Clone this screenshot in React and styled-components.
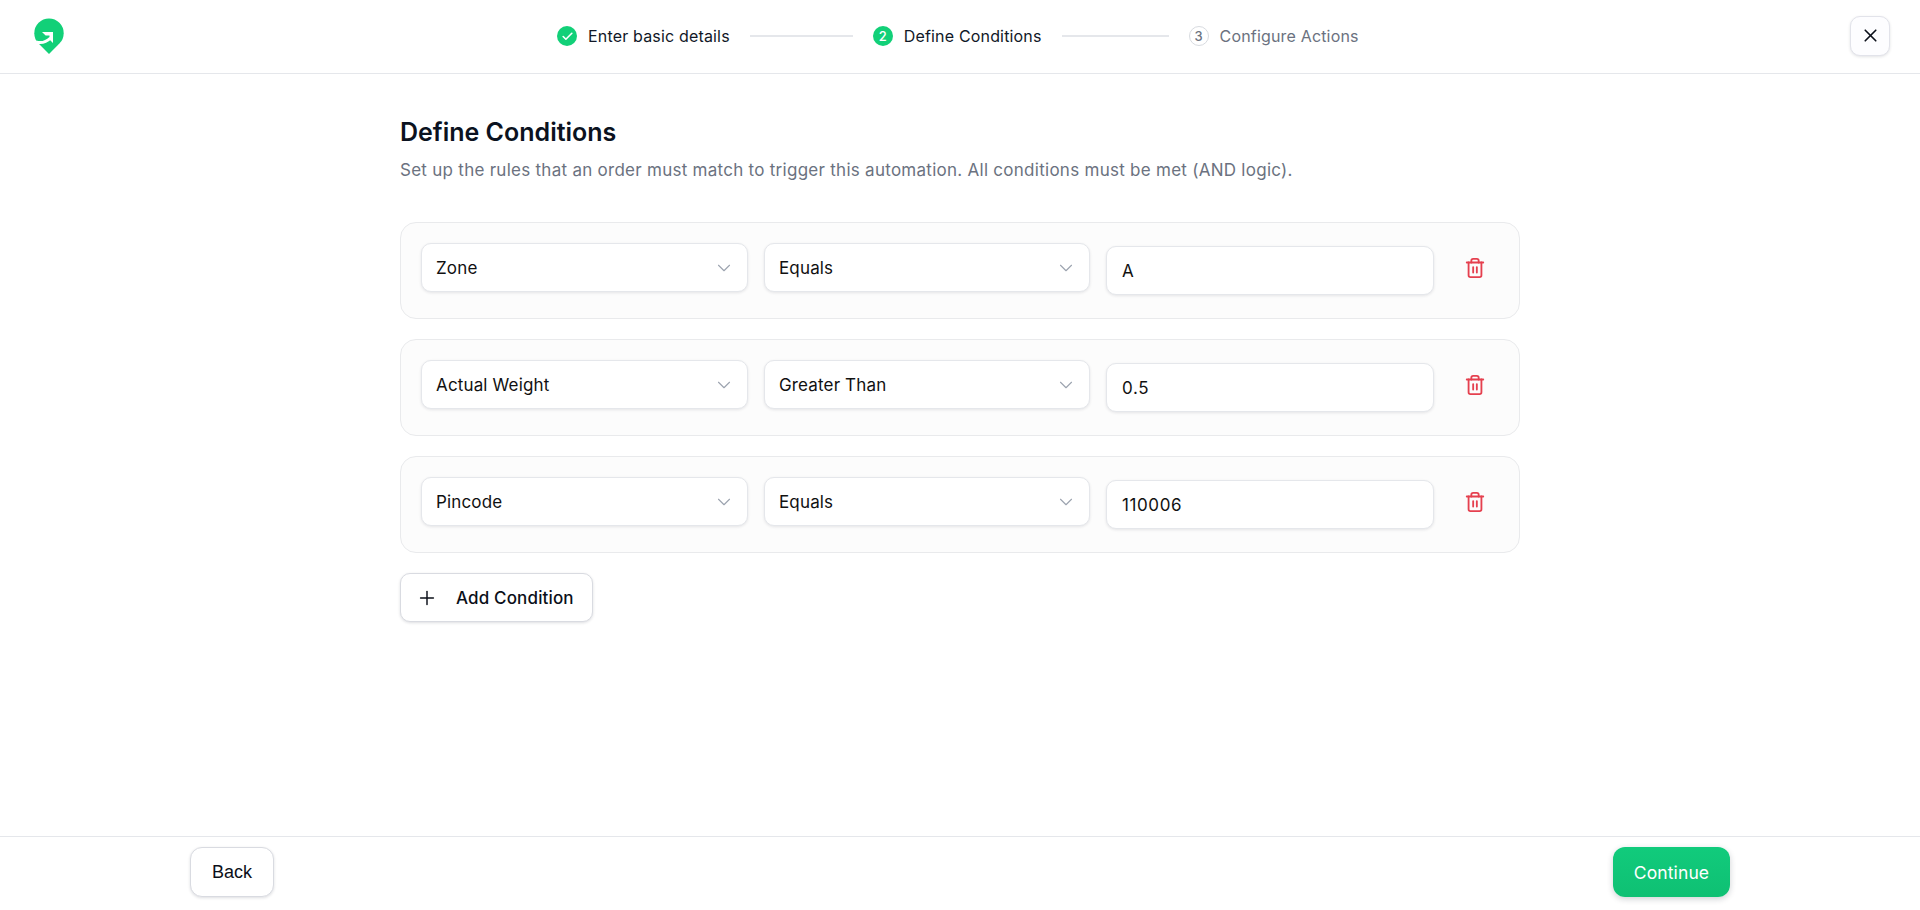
import React from "react";
import styled, { createGlobalStyle } from "styled-components";
import { Check, ChevronDown, Plus, Trash2, X } from "lucide-react";

const GlobalStyle = createGlobalStyle`
  html, body {
    margin: 0;
    padding: 0;
    height: 100%;
    background: #ffffff;
  }
  body {
    font-family: Inter, "Noto Sans", sans-serif;
    color: #0b0f19;
  }
  * {
    box-sizing: border-box;
  }
`;

const conditions = [
  { field: "Zone", operator: "Equals", value: "A" },
  { field: "Actual Weight", operator: "Greater Than", value: "0.5" },
  { field: "Pincode", operator: "Equals", value: "110006" },
];

const Logo = () => (
  <LogoMark width="30" height="36" viewBox="0 0 30 36">
    <path
      d="M15 36 L4.6 25.6 A14.7 14.7 0 1 1 25.4 25.6 Z"
      fill="#12d078"
    />
    <path
      d="M2 24 C7 25.4 12 24.4 16.5 20"
      fill="none"
      stroke="#ffffff"
      strokeWidth="3"
    />
    <path d="M8 14 H19 V25 L15.5 21.5 V17.5 H11.6 Z" fill="#ffffff" />
  </LogoMark>
);

const Step = ({ state, number, label }) => (
  <StepItem>
    <StepCircle $state={state}>
      {state === "done" ? <Check size={13} strokeWidth={3} /> : number}
    </StepCircle>
    <StepLabel $state={state}>{label}</StepLabel>
  </StepItem>
);

const Select = ({ value }) => (
  <SelectBox>
    <span>{value}</span>
    <ChevronDown size={22} strokeWidth={1.2} color="#9ca3af" />
  </SelectBox>
);

const ConditionRow = ({ field, operator, value }) => (
  <RowCard>
    <Select value={field} />
    <Select value={operator} />
    <ValueInput readOnly value={value} />
    <DeleteButton aria-label="Delete condition">
      <Trash2 size={22} strokeWidth={2} color="#e5404f" />
    </DeleteButton>
  </RowCard>
);

const App = () => {
  return (
    <Page>
      <GlobalStyle />
      <Header>
        <Logo />
        <Stepper>
          <Step state="done" label="Enter basic details" />
          <StepLine $width={103} />
          <Step state="active" number="2" label="Define Conditions" />
          <StepLine $width={107} />
          <Step state="todo" number="3" label="Configure Actions" />
        </Stepper>
        <CloseButton aria-label="Close">
          <X size={21} strokeWidth={1.9} color="#0b0f19" />
        </CloseButton>
      </Header>

      <Main>
        <Title>Define Conditions</Title>
        <Subtitle>
          Set up the rules that an order must match to trigger this automation.
          All conditions must be met (AND logic).
        </Subtitle>
        <Rows>
          {conditions.map((item) => (
            <ConditionRow key={item.field} {...item} />
          ))}
        </Rows>
        <AddButton>
          <Plus size={22} strokeWidth={1.6} color="#0b0f19" />
          Add Condition
        </AddButton>
      </Main>

      <Footer>
        <BackButton>Back</BackButton>
        <ContinueButton>Continue</ContinueButton>
      </Footer>
    </Page>
  );
};

const Page = styled.div`
  display: flex;
  flex-direction: column;
  height: 910px;
  background: #ffffff;
`;

const Header = styled.header`
  position: relative;
  display: flex;
  align-items: center;
  justify-content: space-between;
  height: 74px;
  padding: 0 30px 2px 34px;
  border-bottom: 1px solid #e5e7eb;
`;

const LogoMark = styled.svg`
  display: block;
`;

const Stepper = styled.nav`
  position: absolute;
  top: 26px;
  left: 557px;
  display: flex;
  align-items: center;
  gap: 20px;
`;

const StepItem = styled.div`
  display: flex;
  align-items: center;
  gap: 11px;
`;

const StepCircle = styled.span`
  display: flex;
  align-items: center;
  justify-content: center;
  width: 20px;
  height: 20px;
  border-radius: 50%;
  font-size: 13px;
  font-weight: 500;
  color: ${(p) => (p.$state === "todo" ? "#6b7280" : "#ffffff")};
  background: ${(p) => (p.$state === "todo" ? "#ffffff" : "#12d078")};
  border: ${(p) => (p.$state === "todo" ? "1px solid #d8dbe0" : "none")};
`;

const StepLabel = styled.span`
  font-size: 16px;
  line-height: 20px;
  font-weight: 400;
  letter-spacing: 0.17px;
  white-space: nowrap;
  color: ${(p) => (p.$state === "todo" ? "#6b7280" : "#111827")};
`;

const StepLine = styled.span`
  display: block;
  width: ${(p) => p.$width}px;
  height: 2px;
  background: #e5e7eb;
`;

const CloseButton = styled.button`
  display: flex;
  align-items: center;
  justify-content: center;
  width: 40px;
  height: 40px;
  padding: 0;
  background: #fdfdff;
  border: 1px solid #e2e3ea;
  border-radius: 10px;
  box-shadow: 0 1px 3px rgba(16, 24, 40, 0.12);
`;

const Main = styled.main`
  flex: 1;
  width: 1120px;
  margin: 0 auto;
  padding-top: 42px;
`;

const Title = styled.h1`
  margin: 0;
  font-size: 25px;
  line-height: 32px;
  font-weight: 600;
  color: #0b1220;
`;

const Subtitle = styled.p`
  margin: 8px 0 0;
  font-size: 17px;
  line-height: 28px;
  font-weight: 400;
  letter-spacing: 0.27px;
  color: #6b7280;
`;

const Rows = styled.div`
  display: flex;
  flex-direction: column;
  gap: 20px;
  margin-top: 38px;
`;

const RowCard = styled.div`
  display: grid;
  grid-template-columns: 327px 326px 328px 49px;
  gap: 16px;
  align-items: center;
  height: 97px;
  padding: 0 20px;
  background: #fcfcfc;
  border: 1px solid #e9eaec;
  border-radius: 16px;
`;

const SelectBox = styled.div`
  display: flex;
  align-items: center;
  justify-content: space-between;
  height: 49px;
  padding: 0 12px 0 14px;
  margin-bottom: 6px;
  font-size: 17px;
  letter-spacing: 0.15px;
  color: #111111;
  background: #ffffff;
  border: 1px solid #e5e7eb;
  border-radius: 10px;
  box-shadow: 0 1px 3px rgba(16, 24, 40, 0.1);
`;

const ValueInput = styled.input`
  display: block;
  width: 100%;
  height: 49px;
  padding: 2px 15px 0;
  margin-bottom: 1px;
  font-family: inherit;
  font-size: 17px;
  letter-spacing: 0.6px;
  color: #111111;
  background: #ffffff;
  border: 1px solid #e5e7eb;
  border-radius: 10px;
  outline: none;
  box-shadow: 0 1px 3px rgba(16, 24, 40, 0.1);
`;

const DeleteButton = styled.button`
  display: flex;
  align-items: center;
  justify-content: center;
  height: 49px;
  margin-bottom: 5px;
  padding: 0;
  background: transparent;
  border: none;
`;

const AddButton = styled.button`
  display: flex;
  align-items: center;
  gap: 18px;
  width: 193px;
  height: 49px;
  margin-top: 20px;
  padding: 0 15px;
  font-family: inherit;
  font-size: 17px;
  font-weight: 500;
  letter-spacing: 0.15px;
  white-space: nowrap;
  color: #0b0f19;
  background: #ffffff;
  border: 1px solid #d9dbe1;
  border-radius: 10px;
  box-shadow: 0 1px 3px rgba(16, 24, 40, 0.14);
`;

const Footer = styled.footer`
  display: flex;
  align-items: flex-start;
  justify-content: space-between;
  height: 74px;
  padding: 10px 190px 0 190px;
  border-top: 1px solid #e5e7eb;
`;

const BackButton = styled.button`
  width: 84px;
  height: 50px;
  padding: 0;
  font-family: "Liberation Sans", Arial, sans-serif;
  font-size: 18px;
  color: #0b0f19;
  background: #ffffff;
  border: 1px solid #d9dbe1;
  border-radius: 12px;
  box-shadow: 0 1px 3px rgba(16, 24, 40, 0.14);
`;

const ContinueButton = styled.button`
  width: 117px;
  height: 50px;
  padding: 0;
  font-family: inherit;
  font-size: 17.5px;
  font-weight: 400;
  letter-spacing: 0.1px;
  color: #ffffff;
  background: linear-gradient(180deg, #11cb7c 0%, #0fc073 100%);
  border: none;
  border-radius: 12px;
  box-shadow: 0 2px 6px rgba(16, 24, 40, 0.2);
`;

export default App;
